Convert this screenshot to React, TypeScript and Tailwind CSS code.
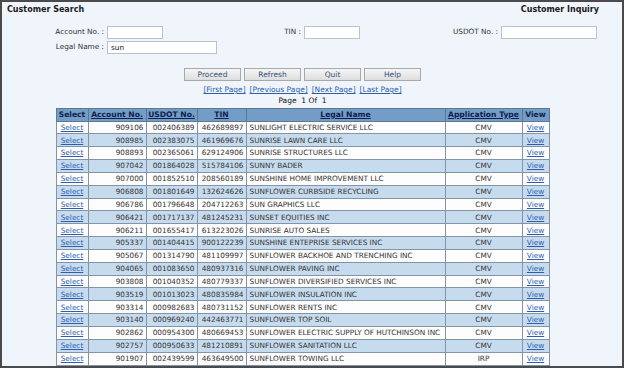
import React from 'react';

const rows = [
  ['909106', '002406389', '462689897', 'SUNLIGHT ELECTRIC SERVICE LLC', 'CMV'],
  ['908985', '002383075', '461969676', 'SUNRISE LAWN CARE LLC', 'CMV'],
  ['908893', '002365061', '629124906', 'SUNRISE STRUCTURES LLC', 'CMV'],
  ['907042', '001864028', '515784106', 'SUNNY BADER', 'CMV'],
  ['907000', '001852510', '208560189', 'SUNSHINE HOME IMPROVEMENT LLC', 'CMV'],
  ['906808', '001801649', '132624626', 'SUNFLOWER CURBSIDE RECYCLING', 'CMV'],
  ['906786', '001796648', '204712263', 'SUN GRAPHICS LLC', 'CMV'],
  ['906421', '001717137', '481245231', 'SUNSET EQUITIES INC', 'CMV'],
  ['906211', '001655417', '613223026', 'SUNRISE AUTO SALES', 'CMV'],
  ['905337', '001404415', '900122239', 'SUNSHINE ENTEPRISE SERVICES INC', 'CMV'],
  ['905067', '001314790', '481109997', 'SUNFLOWER BACKHOE AND TRENCHING INC', 'CMV'],
  ['904065', '001083650', '480937316', 'SUNFLOWER PAVING INC', 'CMV'],
  ['903808', '001040352', '480779337', 'SUNFLOWER DIVERSIFIED SERVICES INC', 'CMV'],
  ['903519', '001013023', '480835984', 'SUNFLOWER INSULATION INC', 'CMV'],
  ['903314', '000982683', '480731152', 'SUNFLOWER RENTS INC', 'CMV'],
  ['903140', '000969240', '442463771', 'SUNFLOWER TOP SOIL', 'CMV'],
  ['902862', '000954300', '480669453', 'SUNFLOWER ELECTRIC SUPPLY OF HUTCHINSON INC', 'CMV'],
  ['902757', '000950633', '481210891', 'SUNFLOWER SANITATION LLC', 'CMV'],
  ['901907', '002439599', '463649500', 'SUNFLOWER TOWING LLC', 'IRP'],
];

function Field({ label, width, labelWidth, value = '' }: { label: string; width: string; labelWidth: string; value?: string }) {
  return (
    <div className="flex items-center">
      <span className={`${labelWidth} pr-[3px] text-right`}>{label}</span>
      <div className={`${width} h-[13px] border border-[#b9c3cc] bg-white pl-[3px] leading-[11px] text-[#222]`}>{value}</div>
    </div>
  );
}

function Button({ children }: { children: React.ReactNode }) {
  return (
    <div className="flex h-[13px] w-[57px] items-center justify-center border border-[#a9a9a9] bg-[linear-gradient(180deg,#f6f6f6_0%,#dedede_100%)] text-[7.5px] text-[#33507e]">
      {children}
    </div>
  );
}

export default function App() {
  return (
    <div className="h-[368px] w-[624px] overflow-hidden border-2 border-[#4a4a4a] bg-[#eff5fb] font-['DejaVu_Sans',Verdana,sans-serif] text-[7.3px] text-[#333]">
      <div className="w-[601px]">
        <div className="flex items-center justify-between pl-[5px] pr-[4px] pt-[2px] text-[8px] font-bold text-[#1a1a1a]">
          <span>Customer Search</span>
          <span>Customer Inquiry</span>
        </div>

        <div className="mt-[10px] flex items-center">
          <Field label="Account No. :" labelWidth="w-[105px]" width="w-[56px]" />
          <Field label="TIN :" labelWidth="w-[141px]" width="w-[56px]" />
          <Field label="USDOT No. :" labelWidth="w-[141px]" width="w-[96px]" />
        </div>
        <div className="mt-[2px] flex items-center">
          <Field label="Legal Name :" labelWidth="w-[105px]" width="w-[110px]" value="sun" />
        </div>

        <div className="mt-[14px] flex justify-center gap-[3px]">
          <Button>Proceed</Button>
          <Button>Refresh</Button>
          <Button>Quit</Button>
          <Button>Help</Button>
        </div>

        <div className="mt-[3px] flex justify-center gap-[4px] text-[7.5px] text-[#2d5db3] underline">
          <span>[First Page]</span>
          <span>[Previous Page]</span>
          <span>[Next Page]</span>
          <span>[Last Page]</span>
        </div>
        <div className="text-center text-[7.5px] text-[#111]">Page&nbsp; 1 Of&nbsp; 1</div>

        <div className="mt-[1px] flex justify-center">
          <table className="w-[493px] table-fixed border-collapse border border-[#3e4f61]">
            <colgroup>
              <col className="w-[32px]" />
              <col className="w-[58px]" />
              <col className="w-[51px]" />
              <col className="w-[49px]" />
              <col className="w-[199px]" />
              <col className="w-[77px]" />
              <col className="w-[27px]" />
            </colgroup>
            <thead>
              <tr className="h-[13px] bg-[#739dc6] text-[7.6px] font-bold text-[#0e1e4c]">
                <th className="border border-[#5f7892]">Select</th>
                <th className="border border-[#5f7892] underline">Account No.</th>
                <th className="border border-[#5f7892] underline">USDOT No.</th>
                <th className="border border-[#5f7892] underline">TIN</th>
                <th className="border border-[#5f7892] underline">Legal Name</th>
                <th className="whitespace-nowrap border border-[#5f7892] underline">Application Type</th>
                <th className="border border-[#5f7892]">View</th>
              </tr>
            </thead>
            <tbody>
              {rows.map((row, index) => (
                <tr key={row[0]} className={`h-[12.85px] leading-none ${index % 2 === 0 ? 'bg-[#fdfdfd]' : 'bg-[#c6dbee]'}`}>
                  <td className="border border-[#8394a6] text-center text-[#2d5db3] underline">Select</td>
                  <td className="border border-[#8394a6] pr-[2px] text-right">{row[0]}</td>
                  <td className="border border-[#8394a6] pr-[2px] text-right">{row[1]}</td>
                  <td className="border border-[#8394a6] pr-[2px] text-right">{row[2]}</td>
                  <td className="whitespace-nowrap border border-[#8394a6] pl-[3px] text-left">{row[3]}</td>
                  <td className="border border-[#8394a6] text-center">{row[4]}</td>
                  <td className="border border-[#8394a6] text-center text-[#2d5db3] underline">View</td>
                </tr>
              ))}
            </tbody>
          </table>
        </div>
      </div>
    </div>
  );
}
